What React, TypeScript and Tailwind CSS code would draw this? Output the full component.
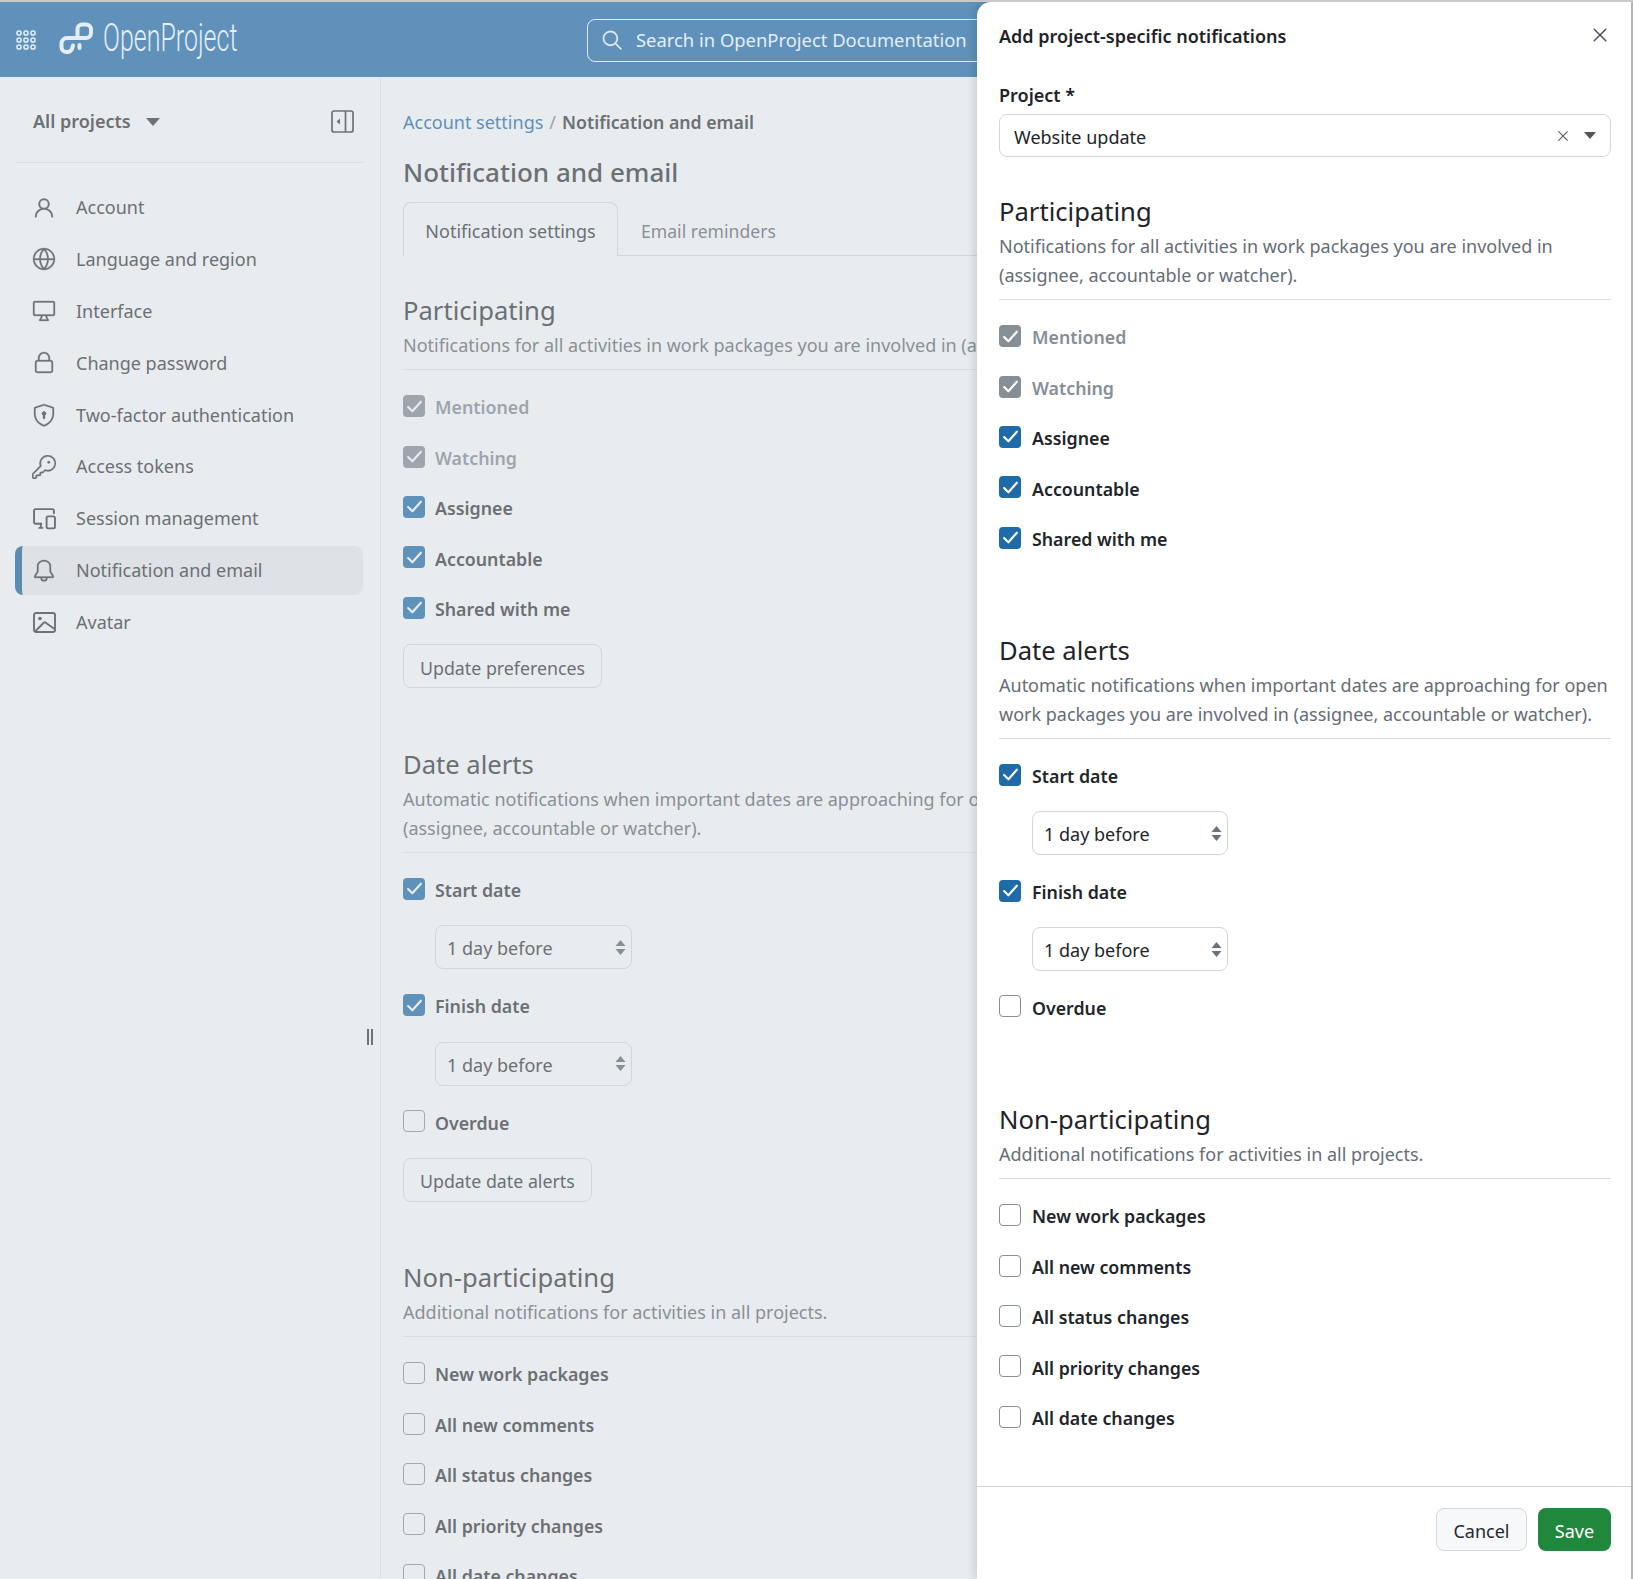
import React from "react";
import { GoPerson, GoGlobe, GoDeviceDesktop, GoLock, GoShieldLock, GoKey, GoBell, GoSearch, GoX } from "react-icons/go";

const Devices = () => (
  <svg width="23" height="23" viewBox="0 0 22 22" fill="none" stroke="currentColor" strokeWidth="1.8" strokeLinejoin="round" strokeLinecap="round">
    <path d="M8 16H2.5A1.5 1.5 0 0 1 1 14.5V3.5A1.5 1.5 0 0 1 2.5 2h16A1.5 1.5 0 0 1 20 3.5V6" />
    <path d="M6 20h3M7.5 16v4" />
    <rect x="13" y="9" width="8" height="11.5" rx="1.5" />
  </svg>
);

const ImageIcon = () => (
  <svg width="23" height="21" viewBox="0 0 23 21" fill="none" stroke="currentColor" strokeWidth="1.9" strokeLinejoin="round">
    <rect x="1" y="1" width="21" height="19" rx="2" />
    <circle cx="7" cy="6.5" r="1.8" fill="currentColor" stroke="none" />
    <path d="M2.5 19 11 10.5a1 1 0 0 1 1.4 0L21.5 17" />
  </svg>
);

const Logo = () => (
  <svg width="36" height="32" viewBox="8 7 36 32" fill="none" stroke="#e4eef5" strokeWidth="4" strokeLinecap="round" strokeLinejoin="round">
    <path d="M27.5 22V14a4.5 4.5 0 0 1 4.5-4.5h4a5 5 0 0 1 5 5v3.5a5 5 0 0 1-5 5H17a5.5 5.5 0 0 0-5.5 5.5v3.5a5 5 0 0 0 5 5h1a5 5 0 0 0 4.5-3l1-3.5" />
    <path d="M29.5 30v3" />
  </svg>
);

const Dots = () => (
  <svg width="20" height="20" viewBox="0 0 20 20" fill="none" stroke="#e4eef5" strokeWidth="1.5">
    {[3, 10, 17].map((y) => [3, 10, 17].map((x) => <circle key={`${x}-${y}`} cx={x} cy={y} r="2.1" />))}
  </svg>
);

const Collapse = () => (
  <svg width="23" height="23" viewBox="0 0 23 23" fill="none" stroke="#6d7276" strokeWidth="1.7">
    <rect x="1" y="1" width="21" height="21" rx="2" />
    <path d="M14.5 1v21" />
    <path d="M9 8.5v6l-3.5-3z" fill="#6d7276" stroke="none" />
  </svg>
);

const Updown = ({ dim }: { dim?: boolean }) => (
  <svg width="11" height="15" viewBox="0 0 11 15" className={dim ? "fill-[#868e96]" : "fill-[#6a737c]"}>
    <path d="M5.5 0 10.5 6H.5zM.5 9h10l-5 6z" />
  </svg>
);

type Kind = "off" | "on" | "locked";

function Check({ label, kind, dim }: { label: string; kind: Kind; dim?: boolean }) {
  const box =
    kind === "off"
      ? dim
        ? "border border-[#a2a9b1] bg-[#e9ecef]"
        : "border border-[#868e96] bg-white"
      : kind === "on"
        ? dim
          ? "bg-[#5f92ba]"
          : "bg-[#1f6aa8]"
        : dim
          ? "bg-[#9ea5ad]"
          : "bg-[#868e96]";
  const text =
    kind === "locked"
      ? dim
        ? "text-[#9ea5ad]"
        : "text-[#868e96]"
      : dim
        ? "text-[#6b7075]"
        : "text-[#212529]";
  return (
    <div className="flex items-center h-[50.4px]">
      <span className={`w-[22px] h-[22px] rounded-[4px] flex items-center justify-center mb-[3px] shrink-0 ${box}`}>
        {kind !== "off" && (
          <svg width="17" height="15" viewBox="0 0 16 14" fill="none" stroke={dim ? "#e9ecef" : "#ffffff"} strokeWidth="2" strokeLinecap="round" strokeLinejoin="round">
            <path d="M2 7.5 6 11.5 14 2.5" />
          </svg>
        )}
      </span>
      <span className={`text-[17.8px] font-semibold ${dim ? "ml-[10px]" : "ml-[11px]"} ${text}`}>{label}</span>
    </div>
  );
}

function Sel({ dim }: { dim?: boolean }) {
  return (
    <div className={`h-[44px] mt-[10px] rounded-[8px] border flex items-center justify-between pl-[11px] pr-[5px] text-[18px] ${dim ? "mb-[12px] ml-[32px] w-[197px] border-[#d2d6da] text-[#6b7075]" : "mb-[11.5px] ml-[33px] w-[196px] border-[#d0d7de] text-[#212529]"}`}>
      <span className="pt-[3px]">1 day before</span>
      <Updown dim={dim} />
    </div>
  );
}

function Head({ title, lines, dim }: { title: string; lines: string[]; dim?: boolean }) {
  return (
    <div className={`border-b pb-[8.5px] ${dim ? "border-[#d9dde1]" : "border-[#d8dee4]"}`}>
      <h2 className={`text-[25.6px] leading-[36px] ${dim ? "text-[#6b7075]" : "text-[#1f2328]"}`}>{title}</h2>
      <div className="pt-[2px]">
        {lines.map((l) => (
          <p key={l} className={`text-[18px] leading-[29px] whitespace-nowrap ${dim ? "text-[#8a9097]" : "text-[#656d76]"}`}>{l}</p>
        ))}
      </div>
    </div>
  );
}

function Btn({ label }: { label: string }) {
  return (
    <button className="block mt-[10px] h-[44px] pt-[3px] px-[16px] rounded-[8px] border border-[#d2d6da] bg-[#e9ecef] text-[17.8px] text-[#6b7075]">{label}</button>
  );
}

function Body({ dim }: { dim?: boolean }) {
  const part = dim
    ? ["Notifications for all activities in work packages you are involved in (assignee, accountable or watcher)."]
    : ["Notifications for all activities in work packages you are involved in", "(assignee, accountable or watcher)."];
  const date = dim
    ? ["Automatic notifications when important dates are approaching for open work packages you are involved in", "(assignee, accountable or watcher)."]
    : ["Automatic notifications when important dates are approaching for open", "work packages you are involved in (assignee, accountable or watcher)."];
  return (
    <>
      <Head title="Participating" lines={part} dim={dim} />
      <div className="pt-[13px]">
        <Check dim={dim} kind="locked" label="Mentioned" />
        <Check dim={dim} kind="locked" label="Watching" />
        <Check dim={dim} kind="on" label="Assignee" />
        <Check dim={dim} kind="on" label="Accountable" />
        <Check dim={dim} kind="on" label="Shared with me" />
        {dim && <Btn label="Update preferences" />}
      </div>
      <div className={dim ? "mt-[59px]" : "mt-[69px]"}>
        <Head title="Date alerts" lines={date} dim={dim} />
        <div className="pt-[12px]">
          <Check dim={dim} kind="on" label="Start date" />
          <Sel dim={dim} />
          <Check dim={dim} kind="on" label="Finish date" />
          <Sel dim={dim} />
          <Check dim={dim} kind="off" label="Overdue" />
          {dim && <Btn label="Update date alerts" />}
        </div>
      </div>
      <div className={dim ? "mt-[58px]" : "mt-[69px]"}>
        <Head title="Non-participating" lines={["Additional notifications for activities in all projects."]} dim={dim} />
        <div className="pt-[13px]">
          <Check dim={dim} kind="off" label="New work packages" />
          <Check dim={dim} kind="off" label="All new comments" />
          <Check dim={dim} kind="off" label="All status changes" />
          <Check dim={dim} kind="off" label="All priority changes" />
          <Check dim={dim} kind="off" label="All date changes" />
        </div>
      </div>
    </>
  );
}

const thick = "stroke-[0.3]";
const menu: [string, React.ReactNode][] = [
  ["Account", <GoPerson size={24} className={thick} />],
  ["Language and region", <GoGlobe size={24} className={thick} />],
  ["Interface", <GoDeviceDesktop size={24} className={thick} />],
  ["Change password", <GoLock size={24} className={thick} />],
  ["Two-factor authentication", <GoShieldLock size={24} className={thick} />],
  ["Access tokens", <GoKey size={24} className={thick} />],
  ["Session management", <Devices />],
  ["Notification and email", <GoBell size={24} className={thick} />],
  ["Avatar", <ImageIcon />],
];

export default function App() {
  return (
    <div className="relative w-full h-[1579px] overflow-hidden bg-[#e9ecef] border-t-2 border-[#c9c9c9] font-['Noto_Sans',sans-serif] flex flex-col">
      <header className="h-[75px] shrink-0 bg-[#5f91ba] flex items-center">
        <span className="ml-[16px]"><Dots /></span>
        <span className="ml-[22px] mb-[3px]"><Logo /></span>
        <span className="ml-[9px] w-[130px] text-[39px] font-light text-[#e4eef5] font-['Roboto',sans-serif] scale-x-[0.64] origin-left whitespace-nowrap mb-[3px]">OpenProject</span>
        <div className="ml-[354px] w-[500px] h-[43px] mt-[1px] shrink-0 rounded-[8px] border border-[#e4eef5] flex items-center pl-[13px] text-[#e4eef5]">
          <GoSearch size={22} className={thick} />
          <span className="ml-[13px] text-[18.4px] whitespace-nowrap">Search in OpenProject Documentation</span>
        </div>
      </header>
      <div className="flex flex-1 min-h-0">
        <aside className="relative w-[381px] shrink-0 border-r border-[#dadee2] pl-[15px] pr-[17px]">
          <div className="h-[86px] border-b border-[#dadee2] flex items-center pl-[18px] pr-[9px] pt-[4px] text-[#6b7075]">
            <span className="text-[18px] font-semibold">All projects</span>
            <svg className="ml-[15px]" width="14" height="8" viewBox="0 0 14 8" fill="#6d7276"><path d="M0 0h14L7 8z" /></svg>
            <span className="ml-auto -mt-[1px]"><Collapse /></span>
          </div>
          <nav className="mt-[20px] text-[#6b7075]">
            {menu.map(([label, icon]) => {
              const active = label === "Notification and email";
              return (
                <div key={label} className={`h-[49px] mb-[2.9px] flex items-center rounded-[8px] text-[18px] ${active ? "bg-[#dee2e6] border-l-[7px] border-[#5b8cb0] pl-[11px]" : "pl-[18px]"}`}>
                  <span className="w-[22px] flex justify-center text-[#6d7276] [&_svg]:shrink-0">{icon}</span>
                  <span className="ml-[21px]">{label}</span>
                </div>
              );
            })}
          </nav>
          <div className="absolute right-[7px] top-[952px] flex gap-[2px]">
            <span className="w-[2px] h-[16px] bg-[#6d7276]" />
            <span className="w-[2px] h-[16px] bg-[#6d7276]" />
          </div>
        </aside>
        <main className="w-[596px] shrink-0 overflow-hidden pl-[22px]">
          <div className="pt-[32px] h-[75px] text-[18px] whitespace-nowrap">
            <span className="text-[#5f91ba]">Account settings</span>
            <span className="text-[#9aa1a8] mx-[6px]">/</span>
            <span className="font-semibold text-[17.7px] text-[#6b7075]">Notification and email</span>
          </div>
          <h1 className="text-[26px] leading-[40px] font-medium text-[#6b7075]">Notification and email</h1>
          <div className="mt-[10px] h-[54px] flex items-stretch border-b border-[#d2d6da] text-[18px]">
            <div className="w-[215px] flex items-center justify-center pt-[4px] rounded-t-[8px] border border-b-0 border-[#d2d6da] text-[#6b7075] -mb-px bg-[#e9ecef]">Notification settings</div>
            <div className="ml-[23px] flex items-center pt-[5px] text-[17.6px] text-[#8a9097]">Email reminders</div>
          </div>
          <div className="mt-[37px]">
            <Body dim />
          </div>
        </main>
      </div>
      <section className="absolute top-0 right-0 bottom-0 w-[656px] bg-white rounded-tl-[14px] border-r-2 border-[#b5b5b5] shadow-[-3px_0_8px_rgba(0,0,0,0.12)] flex flex-col">
        <div className="flex-1 min-h-0 pl-[22px] pr-[20px] overflow-hidden">
          <div className="h-[68px] flex items-center justify-between text-[#1f2328]">
            <h3 className="text-[18px] font-semibold">Add project-specific notifications</h3>
            <GoX size={24} className="text-[#4b5259] -mr-[1px] -mt-[2px]" />
          </div>
          <label className="block mt-[10px] text-[18px] leading-[30px] font-semibold text-[#1f2328]">Project *</label>
          <div className="mt-[4px] h-[43px] rounded-[8px] border border-[#d0d7de] flex items-center pl-[14px] pr-[14px] text-[18px] text-[#212529]">
            <span className="pt-[3px]">Website update</span>
            <GoX size={18} className="ml-auto text-[#5a6168]" />
            <svg className="ml-[12px]" width="12" height="7" viewBox="0 0 12 7" fill="#4f565d"><path d="M0 0h12L6 7z" /></svg>
          </div>
          <div className="mt-[37px]">
            <Body />
          </div>
        </div>
        <footer className="h-[93px] shrink-0 border-t border-[#d0d7de] flex items-start justify-end gap-[11px] pr-[20px] pt-[21px]">
          <button className="w-[91px] h-[43px] pt-[3px] rounded-[8px] border border-[#d0d7de] bg-[#f6f8fa] text-[18px] text-[#24292f]">Cancel</button>
          <button className="w-[73px] h-[43px] pt-[3px] rounded-[8px] bg-[#1f883d] text-[18px] text-white">Save</button>
        </footer>
      </section>
    </div>
  );
}
